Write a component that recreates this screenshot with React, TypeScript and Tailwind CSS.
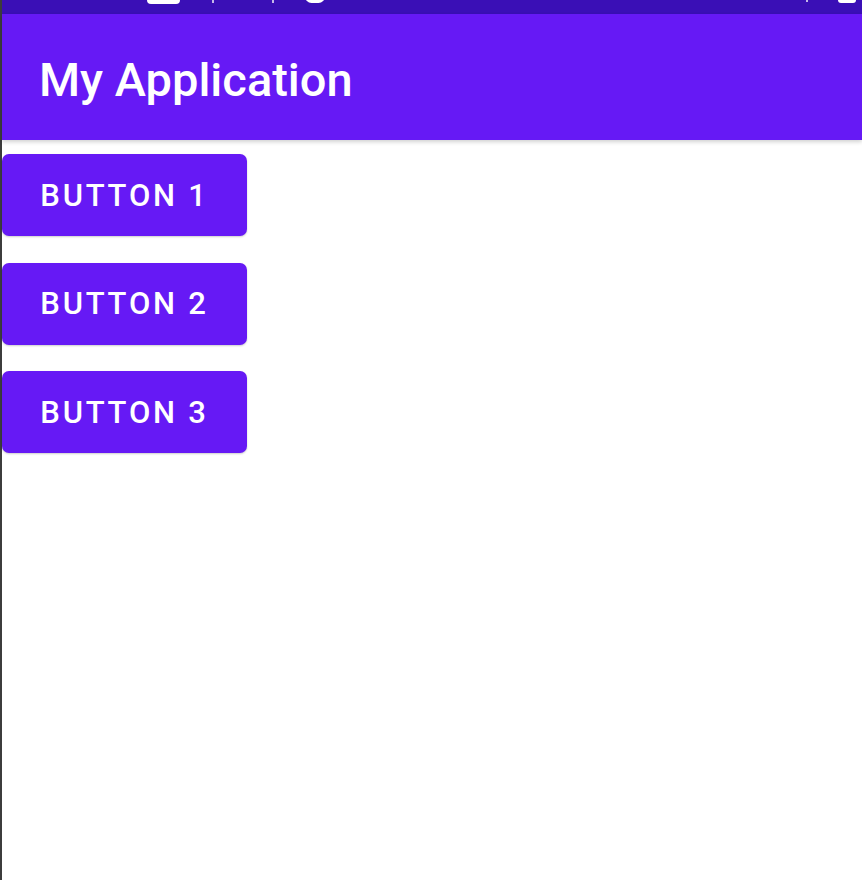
export default function App() {
    const buttons = ["BUTTON 1", "BUTTON 2", "BUTTON 3"];

    return (
        <div className="flex h-[880px] w-[862px] overflow-hidden bg-white" style={{ fontFamily: "Roboto, 'Noto Sans', sans-serif" }}>
            {/* emulator frame edge */}
            <div className="w-[2px] shrink-0 bg-[#3c3c3c]" />

            <div className="flex flex-1 flex-col">
                {/* status bar, icons cut off at the top */}
                <div className="relative h-[14px] shrink-0 bg-[#3a0fb6]">
                    <div className="absolute left-[145px] top-[-8px] h-[12px] w-[33px] rounded-[4px] bg-white" />
                    <div className="absolute left-[210px] top-0 h-[3px] w-[2px] bg-white/70" />
                    <div className="absolute left-[270px] top-0 h-[3px] w-[2px] bg-white/70" />
                    <div className="absolute left-[303px] top-[-10px] h-[13px] w-[20px] rounded-full border-[3px] border-white" />
                    <div className="absolute left-[804px] top-0 h-[2px] w-[2px] bg-white/70" />
                    <div className="absolute left-[836px] top-[-8px] h-[11px] w-[18px] rounded-[3px] bg-white" />
                </div>

                {/* toolbar */}
                <div className="relative z-10 flex h-[126px] shrink-0 items-center bg-[#6619f5] pl-[37px] pt-[4px] shadow-[0_2px_4px_rgba(0,0,0,0.18)]">
                    <h1 className="text-[47px] font-medium leading-none text-white">My Application</h1>
                </div>

                <div className="flex flex-col items-start gap-[26.5px] pt-[14px]">
                    {buttons.map((label) => (
                        <button
                            key={label}
                            className="flex h-[82px] w-[245px] items-center justify-center rounded-[7px] bg-[#6619f5] pt-[2px] text-[31px] font-medium tracking-[0.09em] text-white shadow-[0_1px_2px_rgba(0,0,0,0.2)]"
                        >
                            {label}
                        </button>
                    ))}
                </div>
            </div>
        </div>
    );
}
